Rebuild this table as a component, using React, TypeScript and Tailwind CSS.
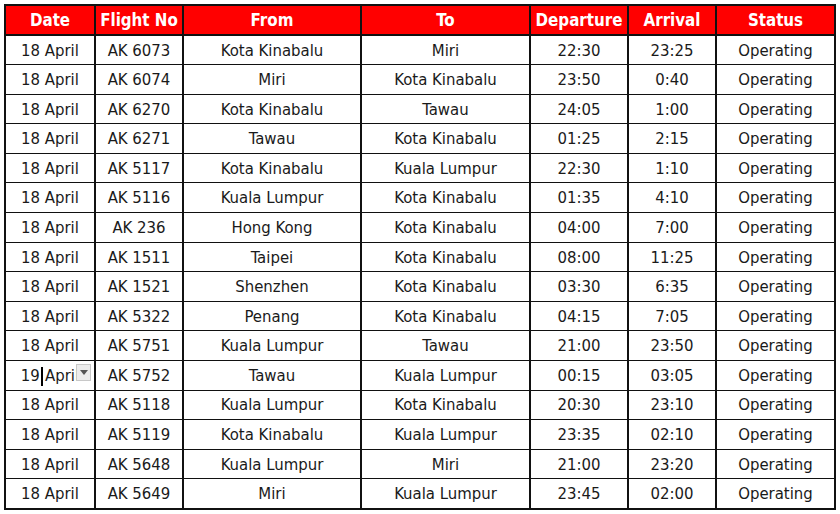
import React from 'react';

type Flight = {
  date: string;
  no: string;
  from: string;
  to: string;
  dep: string;
  arr: string;
  status: string;
};

const FLIGHTS: Flight[] = [
  { date: '18 April', no: 'AK 6073', from: 'Kota Kinabalu', to: 'Miri', dep: '22:30', arr: '23:25', status: 'Operating' },
  { date: '18 April', no: 'AK 6074', from: 'Miri', to: 'Kota Kinabalu', dep: '23:50', arr: '0:40', status: 'Operating' },
  { date: '18 April', no: 'AK 6270', from: 'Kota Kinabalu', to: 'Tawau', dep: '24:05', arr: '1:00', status: 'Operating' },
  { date: '18 April', no: 'AK 6271', from: 'Tawau', to: 'Kota Kinabalu', dep: '01:25', arr: '2:15', status: 'Operating' },
  { date: '18 April', no: 'AK 5117', from: 'Kota Kinabalu', to: 'Kuala Lumpur', dep: '22:30', arr: '1:10', status: 'Operating' },
  { date: '18 April', no: 'AK 5116', from: 'Kuala Lumpur', to: 'Kota Kinabalu', dep: '01:35', arr: '4:10', status: 'Operating' },
  { date: '18 April', no: 'AK 236', from: 'Hong Kong', to: 'Kota Kinabalu', dep: '04:00', arr: '7:00', status: 'Operating' },
  { date: '18 April', no: 'AK 1511', from: 'Taipei', to: 'Kota Kinabalu', dep: '08:00', arr: '11:25', status: 'Operating' },
  { date: '18 April', no: 'AK 1521', from: 'Shenzhen', to: 'Kota Kinabalu', dep: '03:30', arr: '6:35', status: 'Operating' },
  { date: '18 April', no: 'AK 5322', from: 'Penang', to: 'Kota Kinabalu', dep: '04:15', arr: '7:05', status: 'Operating' },
  { date: '18 April', no: 'AK 5751', from: 'Kuala Lumpur', to: 'Tawau', dep: '21:00', arr: '23:50', status: 'Operating' },
  { date: '19 April', no: 'AK 5752', from: 'Tawau', to: 'Kuala Lumpur', dep: '00:15', arr: '03:05', status: 'Operating' },
  { date: '18 April', no: 'AK 5118', from: 'Kuala Lumpur', to: 'Kota Kinabalu', dep: '20:30', arr: '23:10', status: 'Operating' },
  { date: '18 April', no: 'AK 5119', from: 'Kota Kinabalu', to: 'Kuala Lumpur', dep: '23:35', arr: '02:10', status: 'Operating' },
  { date: '18 April', no: 'AK 5648', from: 'Kuala Lumpur', to: 'Miri', dep: '21:00', arr: '23:20', status: 'Operating' },
  { date: '18 April', no: 'AK 5649', from: 'Miri', to: 'Kuala Lumpur', dep: '23:45', arr: '02:00', status: 'Operating' },
];

const HEADERS = ['Date', 'Flight No', 'From', 'To', 'Departure', 'Arrival', 'Status'];
const WIDTHS = [90, 88, 178, 169, 98, 88, 119];

// the row being edited: caret sits in the space after "19", dropdown button covers the end
function EditingDate() {
  return (
    <div className="relative flex items-center justify-center">
      <span>19</span>
      <span className="inline-flex w-[0.31em] justify-center">
        <span className="block w-[2px] h-[19px] bg-black" />
      </span>
      <span>April</span>
      <span className="absolute right-[3px] top-[0px] flex h-[17px] w-[15px] items-center justify-center border border-[#c8c8c8] bg-[#ececec]">
        <svg width="8" height="5" viewBox="0 0 8 5">
          <polygon points="0,0 8,0 4,5" fill="#555" />
        </svg>
      </span>
    </div>
  );
}

export default function App() {
  return (
    <div className="w-[840px] h-[514px] bg-white pt-[4px] pl-[4px]" style={{ fontFamily: '"DejaVu Sans Condensed", Tahoma, "DejaVu Sans", sans-serif' }}>
      <table className="table-fixed border-collapse border-2 border-[#111]" style={{ width: 830 }}>
        <colgroup>
          {WIDTHS.map((w, i) => (
            <col key={i} style={{ width: w }} />
          ))}
        </colgroup>
        <thead>
          <tr className="h-[30px] bg-[#ff0000]">
            {HEADERS.map(h => (
              <th key={h} className="border-2 border-[#111] p-0 pt-[2px] text-center text-[16.8px] font-bold text-white">
                {h}
              </th>
            ))}
          </tr>
        </thead>
        <tbody>
          {FLIGHTS.map((f, i) => (
            <tr key={i} className="h-[29.6px] text-[16.6px] text-[#1a1a1a]">
              <td className="border border-x-2 border-[#111] p-0 pt-[2px] text-center">
                {i === 11 ? <EditingDate /> : f.date}
              </td>
              <td className="border border-x-2 border-[#111] p-0 pt-[2px] text-center">{f.no}</td>
              <td className="border border-x-2 border-[#111] p-0 pt-[2px] text-center">{f.from}</td>
              <td className="border border-x-2 border-[#111] p-0 pt-[2px] text-center">{f.to}</td>
              <td className="border border-x-2 border-[#111] p-0 pt-[2px] text-center">{f.dep}</td>
              <td className="border border-x-2 border-[#111] p-0 pt-[2px] text-center">{f.arr}</td>
              <td className="border border-x-2 border-[#111] p-0 pt-[2px] text-center">{f.status}</td>
            </tr>
          ))}
        </tbody>
      </table>
    </div>
  );
}
